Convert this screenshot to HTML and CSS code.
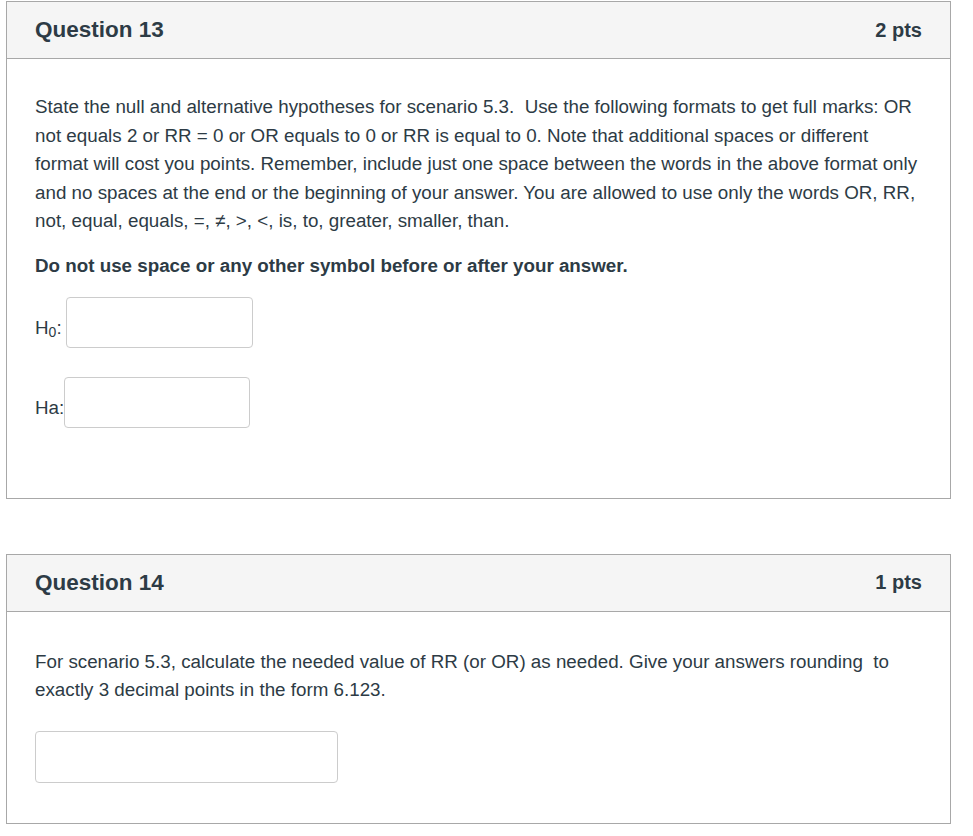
FILE: index.html
```html
<!DOCTYPE html>
<html>
<head>
<meta charset="utf-8">
<link rel="stylesheet" href="styles.css">
</head>
<body>
<div class="quiz">
  <div class="question q13">
    <div class="q-header">
      <span class="q-title">Question 13</span>
      <span class="q-pts">2 pts</span>
    </div>
    <div class="q-body">
      <p class="q-text">State the null and alternative hypotheses for scenario 5.3.&nbsp; Use the following formats to get full marks: OR not equals 2 or RR = 0 or OR equals to 0 or RR is equal to 0. Note that additional spaces or different format will cost you points. Remember, include just one space between the words in the above format only and no spaces at the end or the beginning of your answer. You are allowed to use only the words OR, RR, not, equal, equals, =, ≠, &gt;, &lt;, is, to, greater, smaller, than.</p>
      <p class="q-bold">Do not use space or any other symbol before or after your answer.</p>
      <div class="answer-row">
        <span class="lbl">H<sub>0</sub>:</span>
        <input class="ans ans-h0" type="text">
      </div>
      <div class="answer-row row-ha">
        <span class="lbl">Ha:</span>
        <input class="ans ans-ha" type="text">
      </div>
    </div>
  </div>

  <div class="question q14">
    <div class="q-header">
      <span class="q-title">Question 14</span>
      <span class="q-pts">1 pts</span>
    </div>
    <div class="q-body body14">
      <p class="q-text">For scenario 5.3, calculate the needed value of RR (or OR) as needed. Give your answers rounding&nbsp; to exactly 3 decimal points in the form 6.123.</p>
      <input class="ans ans-wide" type="text">
    </div>
  </div>
</div>
</body>
</html>
```

FILE: styles.css
```css
html, body {
  margin: 0;
  padding: 0;
  background: #ffffff;
}

body {
  font-family: "Liberation Sans", Arial, sans-serif;
  color: #2d3b45;
  padding-top: 1px;
}

.quiz {
  width: 945px;
  margin-left: 6px;
  display: flex;
  flex-direction: column;
  gap: 55px;
}

.question {
  border: 1px solid #a8a8a8;
  background: #fff;
}

.q-header {
  display: flex;
  justify-content: space-between;
  align-items: center;
  height: 56px;
  padding: 0 28px 0 28px;
  background: #f5f5f5;
  border-bottom: 1px solid #a8a8a8;
  font-weight: bold;
}

.q-title {
  font-size: 22.5px;
  color: #2d3b45;
}

.q-pts {
  font-size: 20px;
  color: #2d3b45;
}

.q-body {
  padding: 34px 28px 70px 28px;
}

.q-text {
  margin: 0;
  font-size: 18.8px;
  line-height: 28.6px;
}

.q-bold {
  margin: 16px 0 0 0;
  font-size: 18.8px;
  line-height: 28.6px;
  font-weight: bold;
}

.answer-row {
  display: flex;
  align-items: center;
  margin-top: 16px;
}

.row-ha {
  margin-top: 29px;
}

.lbl {
  font-size: 18.8px;
  line-height: 28px;
  padding-top: 12px;
}

.lbl sub {
  font-size: 14px;
  vertical-align: -3px;
  line-height: 0;
}

.ans {
  box-sizing: border-box;
  height: 51px;
  border: 1px solid #cccccc;
  border-radius: 4px;
  background: #fff;
  font-size: 18px;
  padding: 4px 8px;
  margin: 0;
  outline: none;
}

.ans-h0 {
  width: 187px;
  margin-left: 4px;
}

.ans-ha {
  width: 186px;
}

.body14 {
  padding: 36px 28px 40px 28px;
}

.ans-wide {
  display: block;
  width: 303px;
  height: 52px;
  margin-top: 26px;
}
```
